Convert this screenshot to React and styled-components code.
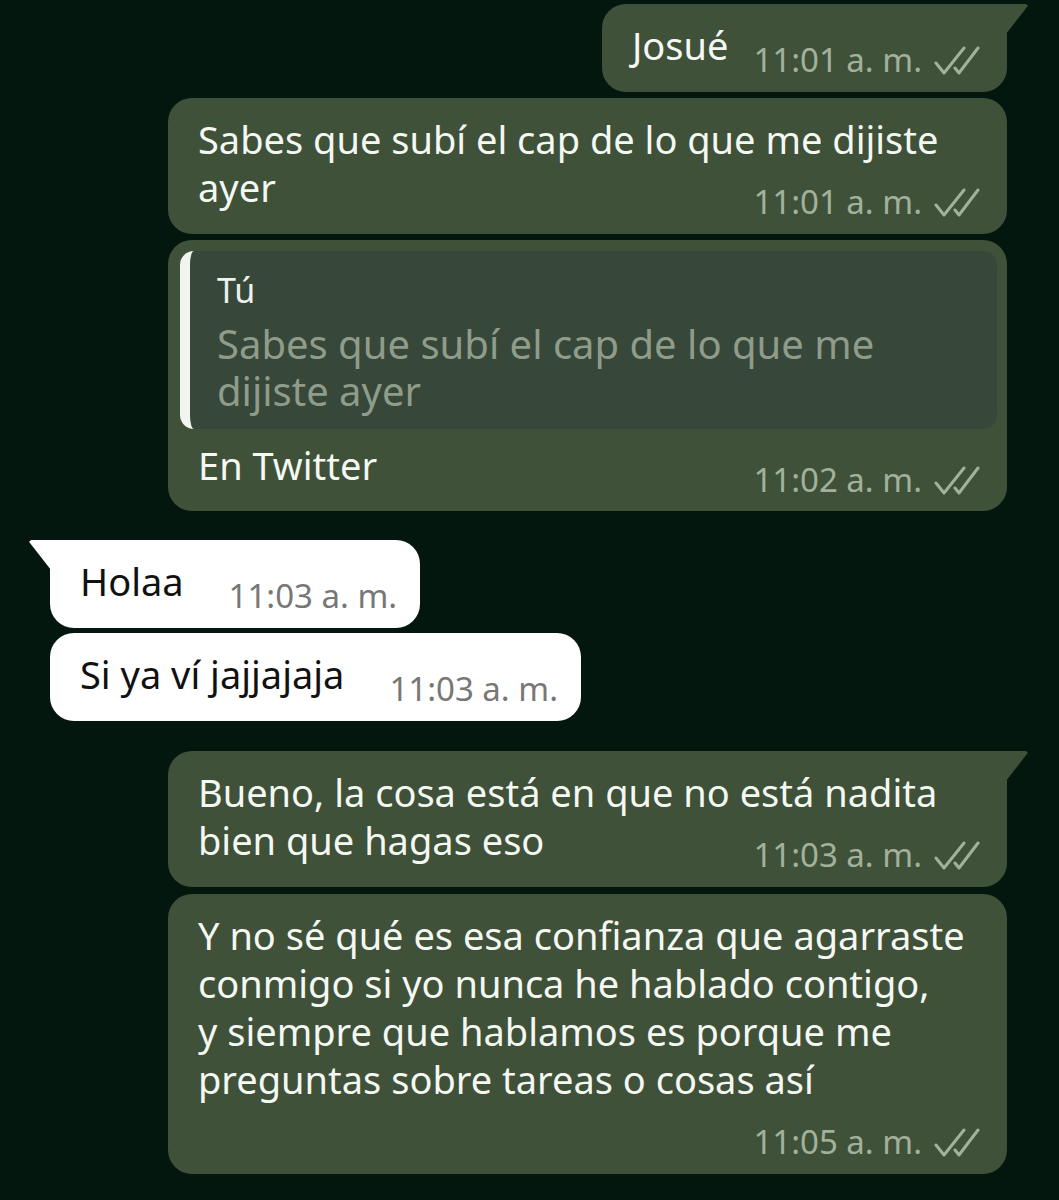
import React from 'react'
import styled, { createGlobalStyle } from 'styled-components'

const Global = createGlobalStyle`
  html, body {
    margin: 0;
    background: #03170f;
  }
  body {
    font-family: "Noto Sans", "Open Sans", sans-serif;
  }
`

const messages = [
  { out: true, tail: true, text: 'Josué', time: '11:01 a. m.' },
  { out: true, gap: 6, text: 'Sabes que subí el cap de lo que me dijiste ayer', time: '11:01 a. m.' },
  {
    out: true, gap: 6, text: 'En Twitter', time: '11:02 a. m.',
    quote: { author: 'Tú', text: 'Sabes que subí el cap de lo que me dijiste ayer' },
  },
  { out: false, tail: true, gap: 29, text: 'Holaa', time: '11:03 a. m.' },
  { out: false, gap: 5, text: 'Si ya ví jajjajaja', time: '11:03 a. m.' },
  { out: true, tail: true, gap: 30, text: 'Bueno, la cosa está en que no está nadita bien que hagas eso', time: '11:03 a. m.' },
  {
    out: true, gap: 7,
    text: 'Y no sé qué es esa confianza que agarraste conmigo si yo nunca he hablado contigo,\ny siempre que hablamos es porque me preguntas sobre tareas o cosas así',
    time: '11:05 a. m.',
  },
]

function Checks() {
  return (
    <svg width="46" height="30" viewBox="0 0 46 30" fill="none" stroke="currentColor" strokeWidth="3" strokeLinecap="round" strokeLinejoin="round">
      <path d="M2 18 L10 28 L30 3" />
      <path d="M21 23 L25 28 L44 3" />
    </svg>
  )
}

export default function App() {
  return (
    <>
      <Global />
      <Chat>
        {messages.map((m, i) => (
          <Bubble key={i} $out={m.out} $tail={m.tail} $gap={m.gap || 0} $quote={!!m.quote}>
            {m.quote && (
              <Quote>
                <QuoteAuthor>{m.quote.author}</QuoteAuthor>
                <QuoteText>{m.quote.text}</QuoteText>
              </Quote>
            )}
            <Body $quote={!!m.quote}>
              {m.text}
              <Meta $out={m.out}>
                {m.time}
                {m.out && <Checks />}
              </Meta>
            </Body>
          </Bubble>
        ))}
      </Chat>
    </>
  )
}

const Chat = styled.div`
  display: flex;
  flex-direction: column;
  padding: 4px 52px 20px 50px;
  min-height: 1200px;
  box-sizing: border-box;
`

const Bubble = styled.div`
  position: relative;
  display: flow-root;
  box-sizing: border-box;
  width: fit-content;
  max-width: 839px;
  margin-top: ${p => p.$gap}px;
  align-self: ${p => (p.$out ? 'flex-end' : 'flex-start')};
  background: ${p => (p.$out ? '#3f5139' : '#ffffff')};
  color: ${p => (p.$out ? '#f4f7f2' : '#111111')};
  border-radius: 24px;
  ${p => p.$tail && (p.$out ? 'border-top-right-radius: 0;' : 'border-top-left-radius: 0;')}
  padding: ${p => (p.$quote ? '11px 10px 11px 12px' : `17px ${p.$out ? 27 : 23}px 12px 30px`)};

  &::before {
    content: '';
    display: ${p => (p.$tail ? 'block' : 'none')};
    position: absolute;
    top: 0;
    width: 22px;
    height: 30px;
    background: inherit;
    ${p => (p.$out
      ? 'left: calc(100% - 1px); clip-path: polygon(0 0, 90% 0, 100% 6%, 0 100%);'
      : 'right: calc(100% - 1px); clip-path: polygon(100% 0, 10% 0, 0 6%, 100% 100%);')}
  }
`

const Body = styled.div`
  font-size: 38px;
  line-height: 48px;
  white-space: pre-line;
  padding: ${p => (p.$quote ? '12px 17px 0 18px' : '0')};
`

const Meta = styled.span`
  float: right;
  display: flex;
  align-items: center;
  gap: 12px;
  margin-top: 19px;
  margin-left: ${p => (p.$out ? 25 : 45)}px;
  font-size: 33px;
  line-height: 40px;
  white-space: nowrap;
  color: ${p => (p.$out ? '#a3b19c' : '#777777')};
`

const Quote = styled.div`
  background: #37473a;
  border-left: 10px solid #f2f4f0;
  border-radius: 14px;
  padding: 19px 20px 15px 27px;
`

const QuoteAuthor = styled.div`
  font-size: 34px;
  line-height: 40px;
  color: #eef1ec;
`

const QuoteText = styled.div`
  margin-top: 10px;
  font-size: 40px;
  line-height: 47px;
  color: #8f9c89;
`
